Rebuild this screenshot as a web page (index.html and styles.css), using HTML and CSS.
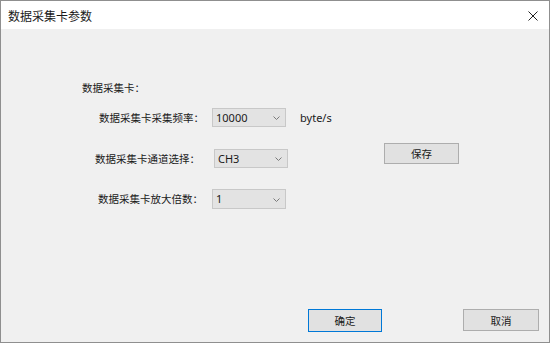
FILE: index.html
```html
<!DOCTYPE html>
<html lang="zh">
<head>
<meta charset="utf-8">
<title>数据采集卡参数</title>
<link rel="stylesheet" href="styles.css">
</head>
<body>
<div class="window">
  <div class="titlebar">
    <span class="title">数据采集卡参数</span>
    <svg class="close" width="10" height="10" viewBox="0 0 10 10"><path d="M0.5 0.5 L9.5 9.5 M9.5 0.5 L0.5 9.5" stroke="#222" stroke-width="1" fill="none"/></svg>
  </div>
  <div class="body">
    <div class="heading">数据采集卡：</div>
    <div class="row row-rate">
      <span class="label label-rate">数据采集卡采集频率：</span>
      <div class="combo combo-a"><span class="val">10000</span><svg class="chev" width="7" height="4" viewBox="0 0 7 4"><path d="M0.5 0.5 L3.5 3.5 L6.5 0.5" stroke="#7a7a7a" fill="none"/></svg></div>
      <span class="unit">byte/s</span>
    </div>
    <div class="row row-ch">
      <span class="label label-ch">数据采集卡通道选择：</span>
      <div class="combo combo-b"><span class="val">CH3</span><svg class="chev" width="7" height="4" viewBox="0 0 7 4"><path d="M0.5 0.5 L3.5 3.5 L6.5 0.5" stroke="#7a7a7a" fill="none"/></svg></div>
      <button class="btn btn-save">保存</button>
    </div>
    <div class="row row-gain">
      <span class="label label-gain">数据采集卡放大倍数：</span>
      <div class="combo combo-c"><span class="val">1</span><svg class="chev" width="7" height="4" viewBox="0 0 7 4"><path d="M0.5 0.5 L3.5 3.5 L6.5 0.5" stroke="#7a7a7a" fill="none"/></svg></div>
    </div>
    <div class="footer">
      <button class="btn btn-ok">确定</button>
      <button class="btn btn-cancel">取消</button>
    </div>
  </div>
</div>
</body>
</html>
```

FILE: styles.css
```css
html, body {
  margin: 0;
  padding: 0;
  background: #ffffff;
}
body {
  font-family: "Noto Sans", "Noto Sans CJK SC", sans-serif;
  color: #000;
}
.window {
  box-sizing: border-box;
  width: 550px;
  height: 343px;
  border: 1px solid #8f8f8f;
  display: flex;
  flex-direction: column;
  background: #f0f0f0;
}
.titlebar {
  height: 28px;
  background: #ffffff;
  display: flex;
  align-items: center;
  justify-content: space-between;
  padding: 0 11px 0 7px;
  flex: none;
}
.title {
  font-family: "Noto Sans CJK SC", sans-serif;
  font-size: 12px;
  color: #1a1a1a;
  line-height: 16px;
  margin-top: 2px;
}
.close {
  display: block;
  margin-top: 2px;
}
.body {
  flex: 1;
  display: flex;
  flex-direction: column;
  background: #f0f0f0;
}
.heading {
  font-family: "Noto Sans CJK SC", sans-serif;
  font-size: 10.5px;
  line-height: 19px;
  margin: 49px 0 0 81px;
  color: #1a1a1a;
}
.row {
  display: flex;
  align-items: flex-start;
}
.label {
  font-family: "Noto Sans CJK SC", sans-serif;
  font-size: 10.5px;
  line-height: 19px;
  height: 19px;
  color: #1a1a1a;
  flex: none;
}
.row-rate {
  margin-top: 11px;
  padding-left: 98px;
}
.label-rate { width: 113px; }
.row-ch {
  margin-top: 16px;
  padding-left: 94px;
}
.row-ch .label { margin-top: 6px; }
.label-ch { width: 119px; }
.row-gain {
  margin-top: 21px;
  padding-left: 97px;
}
.label-gain { width: 114px; line-height: 20px; height: 20px; }
.combo {
  box-sizing: border-box;
  width: 74px;
  height: 19px;
  background: #e3e3e3;
  border: 1px solid #c8c8c8;
  display: flex;
  align-items: center;
  justify-content: space-between;
  padding: 0 5px 0 3px;
  flex: none;
}
.combo-b { margin-top: 6px; }
.combo-c { height: 20px; }
.val {
  font-size: 11px;
  line-height: 14px;
  color: #1a1a1a;
}
.chev {
  display: block;
  margin-top: 1px;
}
.unit {
  font-size: 11px;
  line-height: 19px;
  margin-left: 14px;
  color: #1a1a1a;
}
.btn {
  box-sizing: border-box;
  background: #e1e1e1;
  border: 1px solid #adadad;
  font-family: "Noto Sans CJK SC", sans-serif;
  font-size: 10.5px;
  color: #1a1a1a;
  padding: 0;
  margin: 0;
  display: flex;
  align-items: center;
  justify-content: center;
}
.btn-save {
  width: 75px;
  height: 21px;
  margin-left: 96px;
}
.footer {
  margin-top: auto;
  padding: 0 0 10px 307px;
  display: flex;
  align-items: flex-start;
}
.btn-ok {
  width: 74px;
  height: 23px;
  border-color: #0078d7;
}
.btn-cancel {
  width: 76px;
  height: 22px;
  margin-left: 81px;
}
```
